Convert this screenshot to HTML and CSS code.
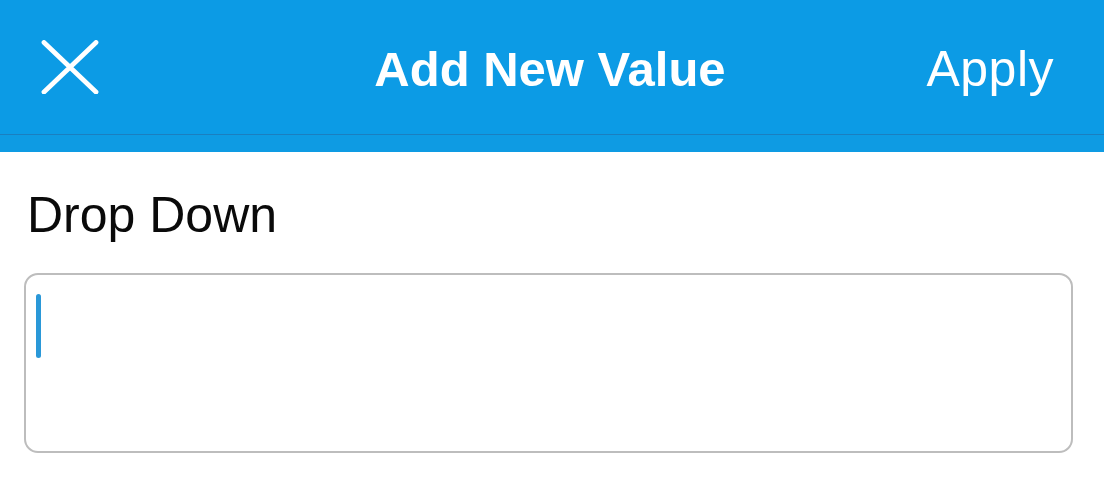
FILE: index.html
```html
<!DOCTYPE html>
<html lang="en">
<head>
<meta charset="utf-8">
<title>Add New Value</title>
<link rel="stylesheet" href="styles.css">
</head>
<body>
<header class="appbar">
  <div class="bar">
    <button class="icon-btn" aria-label="Close">
      <svg width="58" height="54" viewBox="0 0 58 54" aria-hidden="true">
        <path d="M3 2.5 L55 52 M55 2.5 L3 52" stroke="#fff" stroke-width="4.8" stroke-linecap="round" fill="none"/>
      </svg>
    </button>
    <h1 class="title">Add New Value</h1>
    <button class="apply">Apply</button>
  </div>
  <div class="bar-edge"></div>
</header>
<main class="content">
  <label class="field-label">Drop Down</label>
  <div class="textbox"><span class="caret"></span></div>
</main>
</body>
</html>
```

FILE: styles.css
```css
* { box-sizing: border-box; }

html, body {
  margin: 0;
  padding: 0;
  background: #fff;
  font-family: "Liberation Sans", Arial, sans-serif;
}

.appbar {
  background: #0c9be5;
}

.bar {
  height: 135px;
  display: flex;
  align-items: center;
  justify-content: space-between;
  padding: 0 50px 0 40px;
  border-bottom: 1px solid #1a7fc0;
  position: relative;
}

.bar-edge {
  height: 17px;
  background: #0e9be3;
}

.icon-btn {
  background: none;
  border: 0;
  padding: 0;
  width: 58px;
  height: 54px;
  display: flex;
  margin-left: 1px;
}

.title {
  position: absolute;
  left: 0;
  right: 0;
  margin: 3px 0 0;
  text-align: center;
  color: #fff;
  font-size: 49px;
  font-weight: bold;
  pointer-events: none;
  padding-right: 4px;
}

.apply {
  background: none;
  border: 0;
  padding: 0;
  color: #fff;
  font-family: "Liberation Sans", Arial, sans-serif;
  font-size: 50px;
  letter-spacing: 0.5px;
  margin-top: 3px;
}

.content {
  padding: 34px 31px 0 24px;
}

.field-label {
  display: block;
  padding-left: 3px;
  font-size: 50px;
  line-height: 58px;
  color: #0a0a0a;
}

.textbox {
  margin-top: 29px;
  height: 180px;
  border: 2px solid #bdbdbd;
  border-radius: 14px;
  padding: 19px 0 0 10px;
}

.caret {
  display: block;
  width: 5px;
  height: 64px;
  border-radius: 3px;
  background: #2a98d8;
}
```
